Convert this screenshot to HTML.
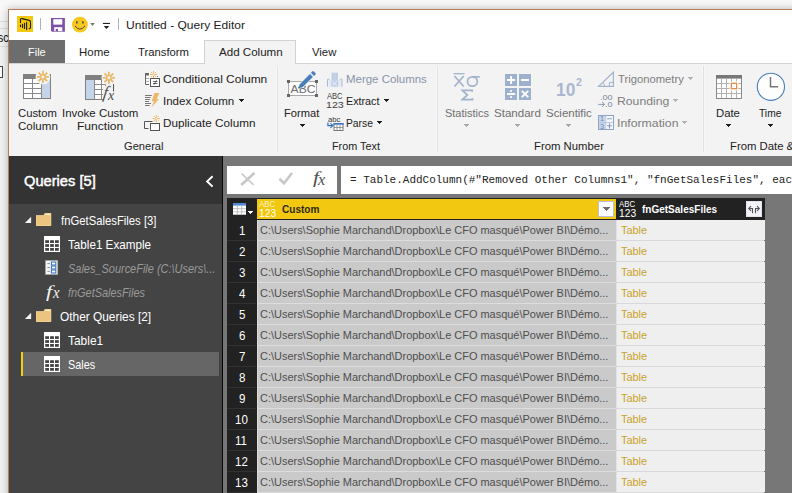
<!DOCTYPE html>
<html><head><meta charset="utf-8"><title>Untitled - Query Editor</title>
<style>
html,body{margin:0;padding:0;}
body{width:792px;height:493px;overflow:hidden;position:relative;background:#f0f0f0;font-family:"Liberation Sans",sans-serif;}
#root{position:absolute;left:0;top:0;width:792px;height:493px;overflow:hidden;}
#root div,#root svg{position:absolute;}
.t{position:absolute;white-space:pre;transform-origin:0 0;}
</style></head><body><div id="root">
<div style="left:0px;top:0px;width:792px;height:9px;background:#f8f8f8;"></div>
<div style="left:0px;top:9px;width:8px;height:484px;background:linear-gradient(#f8f8f8,#f2f2f2 20px,#f2f2f2);"></div>
<div style="left:0px;top:21px;width:8px;height:1px;background:#dcdcdc;"></div>
<div style="left:0px;top:28px;width:8px;height:1px;background:#dcdcdc;"></div>
<div style="left:0px;top:46px;width:8px;height:1px;background:#dcdcdc;"></div>
<div style="left:-2px;top:66px;width:5px;height:12px;background:#fff;border:1px solid #444;box-sizing:border-box;"></div>
<div style="left:8px;top:9px;width:800px;height:500px;background:#fff;border-left:1px solid #b97c58;border-top:1px solid #b97c58;box-sizing:border-box;box-shadow:0 0 8px rgba(0,0,0,0.27);"></div>
<svg style="left:17px;top:16px" width="16" height="16" viewBox="17 16 16 16"><rect x="17" y="16" width="16" height="16" fill="#f2c811"/>
<path d="M20.5 22.6 V19.8 Q20.5 18.4 22 18.6 L29.2 20.4 Q30.5 20.8 30.5 22.2 V27.4 Q30.5 28.6 29.2 28.6" fill="none" stroke="#231f10" stroke-width="1.1" stroke-linecap="round"/>
<g stroke="#231f10" stroke-width="1.15" stroke-linecap="round"><path d="M20.5 25 V26.6 M22.5 24.4 V27.4 M24.5 23.2 V28.5 M26.6 22.3 V29.6"/></g></svg>
<div style="left:40px;top:18px;width:1px;height:12px;background:#b0b0b0;"></div>
<svg style="left:51px;top:18px" width="14" height="14" viewBox="51 18 14 14"><path d="M51 18 H64.9 V31.7 H52 L51 30.7 Z" fill="#7d51a6"/><rect x="53.3" y="19.2" width="9" height="5.4" fill="#fff"/><rect x="54.2" y="27.2" width="8.1" height="4" fill="#fff"/><rect x="55.7" y="28.9" width="2.3" height="2.4" fill="#7d51a6"/></svg>
<svg style="left:71px;top:16px" width="18" height="18" viewBox="71 16 18 18"><circle cx="79.9" cy="24.6" r="7.9" fill="#f8c81c"/><ellipse cx="76.9" cy="22.4" rx="0.75" ry="1.4" fill="#4a4560"/><ellipse cx="82.9" cy="22.4" rx="0.75" ry="1.4" fill="#4a4560"/><path d="M75.2 26.2 Q79.9 32.4 84.7 26.2" fill="none" stroke="#4a4550" stroke-width="1" stroke-linecap="round"/></svg>
<svg style="left:90px;top:23px" width="6" height="4" viewBox="0 0 6 4"><path d="M0.2 0.1 H4.8 L2.5 2.9 Z" fill="#777"/></svg>
<svg style="left:102px;top:22px" width="9" height="8" viewBox="102 22 9 8"><rect x="102.9" y="22.9" width="7.1" height="1.1" fill="#222"/><path d="M103.7 25.9 H109.3 L106.5 28.9 Z" fill="#222"/></svg>
<div style="left:118px;top:18px;width:1px;height:12px;background:#b0b0b0;"></div>
<div style="left:9px;top:40px;width:56px;height:23px;background:#6d6d6d;"></div>
<div style="left:9px;top:63px;width:783px;height:93px;background:#f3f3f3;border-top:1px solid #d2d2d2;box-sizing:border-box;"></div>
<div style="left:204px;top:40px;width:92px;height:24px;background:#f3f3f3;border:1px solid #d2d2d2;border-bottom:none;box-sizing:border-box;"></div>
<div style="left:276px;top:66px;width:3px;height:86px;background:#f8f8f8;"></div>
<div style="left:277px;top:66px;width:1px;height:86px;background:#e0e0e0;"></div>
<div style="left:436px;top:66px;width:3px;height:86px;background:#f8f8f8;"></div>
<div style="left:437px;top:66px;width:1px;height:86px;background:#e0e0e0;"></div>
<div style="left:702px;top:66px;width:3px;height:86px;background:#f8f8f8;"></div>
<div style="left:703px;top:66px;width:1px;height:86px;background:#e0e0e0;"></div>
<svg style="left:20px;top:68px" width="36" height="34" viewBox="20 68 36 34">
<rect x="23.5" y="74.5" width="27" height="24" fill="#fff" stroke="#808080"/>
<rect x="23" y="74" width="28" height="5" fill="#808080"/>
<rect x="42" y="79" width="8" height="19" fill="#c4d5ea"/>
<g stroke="#8a8a8a" stroke-width="1"><line x1="32.5" y1="79" x2="32.5" y2="98"/><line x1="41.5" y1="79" x2="41.5" y2="98"/><line x1="24" y1="83.5" x2="41" y2="83.5"/><line x1="24" y1="88.5" x2="41" y2="88.5"/><line x1="24" y1="93.5" x2="41" y2="93.5"/></g>
<circle cx="42.9" cy="76.9" r="7.3999999999999995" fill="#f3f3f3"/><g stroke="#e9b96a" stroke-width="1.8"><line x1="45.21" y1="76.90" x2="49.00" y2="76.90"/><line x1="44.53" y1="78.53" x2="47.21" y2="81.21"/><line x1="42.90" y1="79.21" x2="42.90" y2="83.00"/><line x1="41.27" y1="78.53" x2="38.59" y2="81.21"/><line x1="40.59" y1="76.90" x2="36.80" y2="76.90"/><line x1="41.27" y1="75.27" x2="38.59" y2="72.59"/><line x1="42.90" y1="74.59" x2="42.90" y2="70.80"/><line x1="44.53" y1="75.27" x2="47.21" y2="72.59"/></g><circle cx="42.9" cy="76.9" r="2.2" fill="#f4f4f8" stroke="#e9b96a" stroke-width="1.4400000000000002"/></svg>
<svg style="left:82px;top:68px" width="38" height="36" viewBox="82 68 38 36">
<rect x="85.5" y="75.5" width="20" height="24" fill="#fff" stroke="#808080"/>
<rect x="85" y="75" width="21" height="5" fill="#808080"/>
<rect x="86" y="80" width="8" height="19" fill="#c4d5ea"/>
<g stroke="#8a8a8a" stroke-width="1"><line x1="94.5" y1="80" x2="94.5" y2="99"/><line x1="101.5" y1="80" x2="101.5" y2="99"/><line x1="95" y1="84.5" x2="106" y2="84.5"/><line x1="95" y1="89.5" x2="104" y2="89.5"/><line x1="95" y1="94.5" x2="103" y2="94.5"/></g>
<rect x="103" y="86" width="14" height="16" fill="#f3f3f3"/>
<circle cx="108.9" cy="77.8" r="7.3999999999999995" fill="#f3f3f3"/><g stroke="#e9b96a" stroke-width="1.8"><line x1="111.21" y1="77.80" x2="115.00" y2="77.80"/><line x1="110.53" y1="79.43" x2="113.21" y2="82.11"/><line x1="108.90" y1="80.11" x2="108.90" y2="83.90"/><line x1="107.27" y1="79.43" x2="104.59" y2="82.11"/><line x1="106.59" y1="77.80" x2="102.80" y2="77.80"/><line x1="107.27" y1="76.17" x2="104.59" y2="73.49"/><line x1="108.90" y1="75.49" x2="108.90" y2="71.70"/><line x1="110.53" y1="76.17" x2="113.21" y2="73.49"/></g><circle cx="108.9" cy="77.8" r="2.2" fill="#f4f4f8" stroke="#e9b96a" stroke-width="1.4400000000000002"/>
<line x1="113.5" y1="84" x2="113.5" y2="91.5" stroke="#555" stroke-width="1"/>
<text transform="translate(102.4,98.4) skewX(-9) scale(1.2,1.28)" font-family="Liberation Serif, serif" font-style="italic" font-size="13.5" fill="#4a4a4a">f</text><text x="108" y="99.6" font-family="Liberation Serif, serif" font-style="italic" font-size="14" fill="#4a4a4a">x</text></svg>
<svg style="left:143px;top:68px" width="20" height="20" viewBox="143 68 20 20">
<rect x="144.6" y="72.6" width="5" height="12.6" fill="#fafafa"/>
<path d="M149 73.5 H145.5 V84.5 H149" stroke="#666" fill="none"/>
<rect x="145.1" y="73.1" width="3.8" height="2.4" fill="#666"/>
<path d="M146 78.5 H149 M146 81.4 H149" stroke="#9a9a9a" stroke-width="0.8"/>
<circle cx="153.5" cy="74.5" r="4.4" fill="#f5f5f7"/><g stroke="#e9b55f" stroke-width="0.95"><line x1="154.80" y1="74.50" x2="157.10" y2="74.50"/><line x1="153.50" y1="75.80" x2="153.50" y2="78.10"/><line x1="152.20" y1="74.50" x2="149.90" y2="74.50"/><line x1="153.50" y1="73.20" x2="153.50" y2="70.90"/></g><g fill="#e9b55f"><circle cx="155.55" cy="76.55" r="0.55"/><circle cx="151.45" cy="76.55" r="0.55"/><circle cx="151.45" cy="72.45" r="0.55"/><circle cx="155.55" cy="72.45" r="0.55"/></g><circle cx="153.5" cy="74.5" r="1.15" fill="#fff" stroke="#e9b55f" stroke-width="0.9"/>
<line x1="153.5" y1="76" x2="153.5" y2="78.4" stroke="#e9b55f" stroke-width="0.95"/>
<rect x="150.5" y="78.5" width="9" height="8" fill="#fff" stroke="#555" stroke-width="1"/>
<path d="M153 81.5 H157.4 M153 83.5 H157.4 M156.6 80.3 L153.9 84.8" stroke="#444" stroke-width="0.8" fill="none"/>
<circle cx="157.5" cy="76.4" r="0.5" fill="#555"/></svg>
<svg style="left:143px;top:92px" width="20" height="18" viewBox="143 92 20 18">
<g stroke="#6a6a6a" stroke-width="0.9"><line x1="145" y1="95.5" x2="151.8" y2="95.5"/><line x1="145" y1="97.5" x2="150.5" y2="97.5"/><line x1="145" y1="99.5" x2="149.9" y2="99.5"/><line x1="145" y1="101.5" x2="149" y2="101.5"/><line x1="145" y1="103.5" x2="151" y2="103.5"/><line x1="145" y1="105.5" x2="149.6" y2="105.5"/></g>
<path d="M154.5 93.1 L159.4 93.1 L156.7 98.9 L159 98.9 L151.4 107.4 L154 101.2 L151.6 101.2 Z" fill="#ebb868"/></svg>
<svg style="left:143px;top:112px" width="20" height="21" viewBox="143 112 20 21">
<path d="M148.5 128.5 H144.5 V121.5 H152.5" fill="none" stroke="#555"/>
<rect x="150.5" y="123.5" width="9" height="7" fill="#fff" stroke="#555"/>
<circle cx="156.3" cy="118.6" r="4.4" fill="#f5f5f7"/><g stroke="#e9b55f" stroke-width="0.95"><line x1="157.60" y1="118.60" x2="159.90" y2="118.60"/><line x1="156.30" y1="119.90" x2="156.30" y2="122.20"/><line x1="155.00" y1="118.60" x2="152.70" y2="118.60"/><line x1="156.30" y1="117.30" x2="156.30" y2="115.00"/></g><g fill="#e9b55f"><circle cx="158.35" cy="120.65" r="0.55"/><circle cx="154.25" cy="120.65" r="0.55"/><circle cx="154.25" cy="116.55" r="0.55"/><circle cx="158.35" cy="116.55" r="0.55"/></g><circle cx="156.3" cy="118.6" r="1.15" fill="#fff" stroke="#e9b55f" stroke-width="0.9"/></svg>
<svg style="left:284px;top:68px" width="38" height="32" viewBox="284 68 38 32">
<rect x="288.5" y="81.5" width="28" height="14" fill="#fdfdfd" stroke="#a0a0a0" stroke-width="0.9"/>
<g fill="#666"><rect x="287" y="80" width="3" height="3"/><rect x="315" y="80" width="3" height="3"/><rect x="287" y="94" width="3" height="3"/><rect x="315" y="94" width="3" height="3"/></g>
<text x="290.6" y="93" font-family="Liberation Sans, sans-serif" font-size="11.8" fill="#6c6c6c" textLength="24.8" lengthAdjust="spacingAndGlyphs">ABC</text>
<path d="M298.2 88.5 L299.2 84.4 L310 73.6 L313.3 76.9 L302.4 87.7 Z" fill="#4a7ebb" stroke="#f3f3f3" stroke-width="0.7"/>
<path d="M310.9 72.7 L312.2 71.4 Q313 70.8 313.8 71.5 L315.4 73.1 Q316 73.9 315.4 74.7 L314.1 76 Z" fill="#4a7ebb"/>
<path d="M298.2 88.5 L298.7 86.4 L300.3 88 Z" fill="#2c5a94"/></svg>
<svg style="left:325px;top:70px" width="20" height="18" viewBox="325 70 20 18">
<path d="M329.6 79.2 H327.5 V86.6 M339.8 79.2 H341.9 V86.6" fill="none" stroke="#a5b9d8" stroke-width="1"/>
<rect x="328.6" y="80" width="12.2" height="6.8" fill="#e3e9f3"/>
<rect x="332" y="72.7" width="5.4" height="14.1" fill="#c3d1e7"/>
<path d="M332 80 L334.7 84.4 L337.4 80 M332 86.8 L334.7 83 L337.4 86.8" fill="none" stroke="#e6ecf5" stroke-width="1"/>
<path d="M332 72.7 V86.8 M337.4 72.7 V86.8" stroke="#b2c3de" stroke-width="0.7"/></svg>
<svg style="left:325px;top:121px" width="20" height="11" viewBox="325 121 20 11">
<path d="M327.9 122.4 V125.6 H332" fill="none" stroke="#2f6fc0" stroke-width="1.2"/><path d="M330.4 123.3 L333 125.6 L330.4 127.9" fill="none" stroke="#2f6fc0" stroke-width="1.1"/>
<rect x="334" y="123.5" width="9" height="7" fill="#fff" stroke="#6a6a6a" stroke-width="0.9"/><rect x="333.5" y="123" width="10" height="1.7" fill="#3a76c4"/>
<path d="M337 125 V130.5 M340 125 V130.5 M334 127.5 H343" stroke="#777" stroke-width="0.7"/></svg>
<svg style="left:450px;top:70px" width="34" height="34" viewBox="450 70 34 34">
<g stroke="#a2b3cd" fill="none" stroke-width="1.7">
<path d="M453.4 73.7 H464.6" stroke-width="1.3"/>
<path d="M454.5 76 L463.7 86.5 M463.7 76 L454.5 86.5"/>
<ellipse cx="472.4" cy="81.5" rx="4.9" ry="4.7"/><path d="M472.4 76.8 H479.8"/>
<path d="M472.2 91.8 V90.3 H462.3 L467.4 95 L462.3 99.6 H472.5 V98"/>
</g></svg>
<svg style="left:504px;top:73px" width="28" height="28" viewBox="504 73 28 28">
<rect x="505" y="74" width="12" height="12" fill="#9db1cf"/><rect x="519" y="74" width="12" height="12" fill="#9db1cf"/>
<rect x="505" y="88" width="12" height="12" fill="#9db1cf"/><rect x="519" y="88" width="12" height="12" fill="#9db1cf"/>
<g stroke="#fff" stroke-width="1.9"><path d="M507 80 H515.2 M511.1 75.9 V84.1"/><path d="M521 80 H529"/><path d="M507 94 H515.2"/><path d="M521.8 90.8 L528.2 97.2 M528.2 90.8 L521.8 97.2"/></g>
<g fill="#fff"><circle cx="511.1" cy="91" r="1.05"/><circle cx="511.1" cy="97.1" r="1.05"/></g></svg>
<svg style="left:596px;top:70px" width="20" height="19" viewBox="596 70 20 19">
<path d="M598.6 86.4 H613.4 V72.2 Z" fill="none" stroke="#a2b3cd" stroke-width="1.2"/>
<path d="M609.4 86.4 V82.4 H613.4" fill="none" stroke="#a2b3cd" stroke-width="1"/>
<path d="M604.4 86.4 A5 5 0 0 0 603 82.6" fill="none" stroke="#a2b3cd" stroke-width="1"/></svg>
<svg style="left:597px;top:101px" width="9" height="7" viewBox="597 101 9 7"><path d="M598.2 104.4 H604.4 M602 102 L604.6 104.4 L602 106.8" fill="none" stroke="#8a9ab4" stroke-width="1"/></svg>
<svg style="left:597px;top:114px" width="18" height="17" viewBox="597 114 18 17">
<rect x="598.5" y="115.5" width="15" height="14" fill="#f4f8fd" stroke="#8fa3c6"/>
<rect x="599" y="116" width="6.4" height="13" fill="#c9d6ea"/>
<path d="M599 122.5 H613 M605.7 116 V129" stroke="#b4c3dc" stroke-width="0.9"/>
<path d="M607 118.8 H612 M607 125.8 H612 M609.5 123.2 V128.4" stroke="#8a9fc2" stroke-width="1.1"/>
<text x="600" y="121.4" font-family="Liberation Sans, sans-serif" font-size="7.4" fill="#7088b0">1</text>
<text x="600" y="128.6" font-family="Liberation Sans, sans-serif" font-size="7.4" fill="#7088b0">3</text></svg>
<svg style="left:715px;top:74px" width="28" height="26" viewBox="715 74 28 26">
<rect x="716.5" y="75.5" width="25" height="23" fill="#fff" stroke="#8a8a8a"/>
<rect x="716" y="75" width="26" height="3.6" fill="#777"/>
<g stroke="#b2b2b2" stroke-width="1"><path d="M721.5 79 V98 M726.5 79 V98 M731.5 79 V98 M736.5 79 V98 M717 83.5 H741 M717 88.5 H741 M717 93.5 H741"/></g>
<rect x="729.6" y="81.6" width="8.8" height="8.8" fill="#fff"/><rect x="731.3" y="83.3" width="5.4" height="5.4" fill="#fff" stroke="#e8873a" stroke-width="1.2"/></svg>
<svg style="left:755px;top:71px" width="32" height="32" viewBox="755 71 32 32">
<circle cx="770.9" cy="86.8" r="13.6" fill="#fff" stroke="#4a7ebb" stroke-width="1.1"/>
<path d="M770.5 77 V86.8 H778.2" fill="none" stroke="#777" stroke-width="1.5"/></svg>
<div style="left:9px;top:156px;width:783px;height:337px;background:#777;"></div>
<div style="left:9px;top:156px;width:213px;height:48px;background:#333;"></div>
<div style="left:9px;top:204px;width:213px;height:289px;background:#444;"></div>
<div style="left:222px;top:156px;width:1px;height:337px;background:#060606;"></div>
<svg style="left:204px;top:174px" width="12" height="15" viewBox="0 0 12 15"><path d="M8.6 2.2 L3.2 7.4 L8.6 12.6" fill="none" stroke="#fff" stroke-width="2"/></svg>
<svg style="left:24px;top:216px" width="8" height="8" viewBox="0 0 8 8"><path d="M7.1 0.8 V6.9 H0.9 Z" fill="#f4f4f4"/></svg>
<svg style="left:36px;top:213px" width="16" height="13" viewBox="0 0 16 13"><path d="M0 2.3 L7.6 2.3 L8.9 0 L15.1 0 L15.1 12.9 L0 12.9 Z" fill="#ebc580"/><path d="M0.3 2.6 H7.8 L9.1 0.3 H14.8 V12.6 H0.3 Z" fill="none" stroke="#f3d69c" stroke-width="0.6"/><path d="M9.6 1.5 H14.2" stroke="#fff6e2" stroke-width="0.9"/></svg>
<svg style="left:44px;top:236px" width="16" height="16" viewBox="0 0 16 16"><rect x="0" y="0" width="16" height="16" fill="#fff"/><g fill="#444"><rect x="1.2" y="4.2" width="3.8" height="2.8"/><rect x="6.1" y="4.2" width="3.8" height="2.8"/><rect x="11.0" y="4.2" width="3.8" height="2.8"/><rect x="1.2" y="8.1" width="3.8" height="2.8"/><rect x="6.1" y="8.1" width="3.8" height="2.8"/><rect x="11.0" y="8.1" width="3.8" height="2.8"/><rect x="1.2" y="12.0" width="3.8" height="2.8"/><rect x="6.1" y="12.0" width="3.8" height="2.8"/><rect x="11.0" y="12.0" width="3.8" height="2.8"/></g></svg>
<svg style="left:45px;top:260px" width="14" height="15" viewBox="0 0 14 15"><rect x="0.4" y="0.4" width="12.4" height="14.2" fill="#f6f6f6" stroke="#9a9a9a" stroke-width="0.6"/>
<g stroke="#8a8a8a" stroke-width="1"><path d="M2.4 3.6 H4.8 M2.4 7.5 H4.8 M2.4 11.4 H4.8"/></g>
<g fill="#fff" stroke="#2f6fc0" stroke-width="1"><rect x="6.4" y="2" width="4.4" height="3"/><rect x="6.4" y="6" width="4.4" height="3"/><rect x="6.4" y="10" width="4.4" height="3"/></g></svg>
<svg style="left:24px;top:312px" width="8" height="8" viewBox="0 0 8 8"><path d="M7.1 0.8 V6.9 H0.9 Z" fill="#f4f4f4"/></svg>
<svg style="left:36px;top:309px" width="16" height="13" viewBox="0 0 16 13"><path d="M0 2.3 L7.6 2.3 L8.9 0 L15.1 0 L15.1 12.9 L0 12.9 Z" fill="#ebc580"/><path d="M0.3 2.6 H7.8 L9.1 0.3 H14.8 V12.6 H0.3 Z" fill="none" stroke="#f3d69c" stroke-width="0.6"/><path d="M9.6 1.5 H14.2" stroke="#fff6e2" stroke-width="0.9"/></svg>
<svg style="left:44px;top:332px" width="16" height="16" viewBox="0 0 16 16"><rect x="0" y="0" width="16" height="16" fill="#fff"/><g fill="#444"><rect x="1.2" y="4.2" width="3.8" height="2.8"/><rect x="6.1" y="4.2" width="3.8" height="2.8"/><rect x="11.0" y="4.2" width="3.8" height="2.8"/><rect x="1.2" y="8.1" width="3.8" height="2.8"/><rect x="6.1" y="8.1" width="3.8" height="2.8"/><rect x="11.0" y="8.1" width="3.8" height="2.8"/><rect x="1.2" y="12.0" width="3.8" height="2.8"/><rect x="6.1" y="12.0" width="3.8" height="2.8"/><rect x="11.0" y="12.0" width="3.8" height="2.8"/></g></svg>
<div style="left:21px;top:352px;width:198px;height:24px;background:#666;"></div>
<div style="left:21px;top:352px;width:2px;height:24px;background:#f5cd14;"></div>
<svg style="left:44px;top:356px" width="16" height="16" viewBox="0 0 16 16"><rect x="0" y="0" width="16" height="16" fill="#fff"/><g fill="#444"><rect x="1.2" y="4.2" width="3.8" height="2.8"/><rect x="6.1" y="4.2" width="3.8" height="2.8"/><rect x="11.0" y="4.2" width="3.8" height="2.8"/><rect x="1.2" y="8.1" width="3.8" height="2.8"/><rect x="6.1" y="8.1" width="3.8" height="2.8"/><rect x="11.0" y="8.1" width="3.8" height="2.8"/><rect x="1.2" y="12.0" width="3.8" height="2.8"/><rect x="6.1" y="12.0" width="3.8" height="2.8"/><rect x="11.0" y="12.0" width="3.8" height="2.8"/></g></svg>
<div style="left:227px;top:166px;width:110px;height:27.5px;background:#fff;"></div>
<div style="left:341px;top:166px;width:451px;height:27.5px;background:#fff;"></div>
<svg style="left:238px;top:170px" width="20" height="18" viewBox="238 170 20 18"><path d="M241.6 173.6 L253.6 184.8" stroke="#cbcbcb" stroke-width="1.7" fill="none"/><path d="M254.4 173 L241.2 185" stroke="#c6c6c6" stroke-width="2.6" fill="none"/></svg>
<svg style="left:276px;top:170px" width="20" height="18" viewBox="276 170 20 18"><path d="M279.4 178.8 L284 183.2 L292 173" stroke="#c8c8c8" stroke-width="2.6" fill="none"/></svg>
<div style="left:227px;top:198px;width:30px;height:295px;background:#222;"></div>
<div style="left:257px;top:198px;width:508px;height:22px;background:#222;"></div>
<div style="left:257px;top:199px;width:359px;height:20px;background:#f2c811;"></div>
<svg style="left:232px;top:202px" width="16" height="14" viewBox="232 202 16 14"><rect x="233" y="203" width="13" height="11.7" fill="#fff"/><rect x="233" y="203" width="13" height="2.6" fill="#5088d2"/>
<g fill="#b9b9b9"><rect x="236.9" y="205.6" width="0.9" height="9.1"/><rect x="241.3" y="205.6" width="0.9" height="9.1"/><rect x="233" y="208.3" width="13" height="0.9"/><rect x="233" y="211.4" width="13" height="0.9"/></g></svg>
<div style="left:248px;top:211px;width:5px;height:1px;background:#fff;"></div>
<div style="left:249px;top:212px;width:3px;height:1px;background:#fff;"></div>
<div style="left:250px;top:213px;width:1px;height:1px;background:#fff;"></div>
<div style="left:598px;top:201px;width:16px;height:16px;background:#fff;border:1px solid #b9c1d8;box-sizing:border-box;"></div>
<div style="left:603px;top:207px;width:7px;height:1px;background:#6e6e6e;"></div>
<div style="left:604px;top:208px;width:5px;height:1px;background:#6e6e6e;"></div>
<div style="left:605px;top:209px;width:3px;height:1px;background:#6e6e6e;"></div>
<div style="left:606px;top:210px;width:1px;height:1px;background:#6e6e6e;"></div>
<div style="left:746px;top:201px;width:16px;height:16px;background:#f2f4fa;border:1px solid #e2e5ee;box-sizing:border-box;"></div>
<svg style="left:746px;top:201px" width="16" height="16" viewBox="746 201 16 16"><path d="M752.5 213.2 V208.5 H749.2 M751 206.2 L748.7 208.5 L751 210.8 M755.5 213.2 V208.5 H758.8 M757 206.2 L759.3 208.5 L757 210.8" fill="none" stroke="#555" stroke-width="1.1"/></svg>
<div style="left:257px;top:220px;width:359px;height:20px;background:#cacaca;"></div>
<div style="left:616px;top:220px;width:149px;height:20px;background:#efefef;"></div>
<div style="left:257px;top:220px;width:1px;height:20px;background:#dcdcdc;"></div>
<div style="left:616px;top:220px;width:1px;height:20px;background:#e2e2e2;"></div>
<div style="left:257px;top:241px;width:359px;height:20px;background:#cacaca;"></div>
<div style="left:616px;top:241px;width:149px;height:20px;background:#efefef;"></div>
<div style="left:257px;top:241px;width:1px;height:20px;background:#dcdcdc;"></div>
<div style="left:616px;top:241px;width:1px;height:20px;background:#e2e2e2;"></div>
<div style="left:227px;top:240px;width:29px;height:1px;background:#323232;"></div>
<div style="left:257px;top:240px;width:359px;height:1px;background:#dddddd;"></div>
<div style="left:616px;top:240px;width:148px;height:1px;background:#d9d9d9;"></div>
<div style="left:257px;top:262px;width:359px;height:20px;background:#cacaca;"></div>
<div style="left:616px;top:262px;width:149px;height:20px;background:#efefef;"></div>
<div style="left:257px;top:262px;width:1px;height:20px;background:#dcdcdc;"></div>
<div style="left:616px;top:262px;width:1px;height:20px;background:#e2e2e2;"></div>
<div style="left:227px;top:261px;width:29px;height:1px;background:#323232;"></div>
<div style="left:257px;top:261px;width:359px;height:1px;background:#dddddd;"></div>
<div style="left:616px;top:261px;width:148px;height:1px;background:#d9d9d9;"></div>
<div style="left:257px;top:283px;width:359px;height:20px;background:#cacaca;"></div>
<div style="left:616px;top:283px;width:149px;height:20px;background:#efefef;"></div>
<div style="left:257px;top:283px;width:1px;height:20px;background:#dcdcdc;"></div>
<div style="left:616px;top:283px;width:1px;height:20px;background:#e2e2e2;"></div>
<div style="left:227px;top:282px;width:29px;height:1px;background:#323232;"></div>
<div style="left:257px;top:282px;width:359px;height:1px;background:#dddddd;"></div>
<div style="left:616px;top:282px;width:148px;height:1px;background:#d9d9d9;"></div>
<div style="left:257px;top:304px;width:359px;height:20px;background:#cacaca;"></div>
<div style="left:616px;top:304px;width:149px;height:20px;background:#efefef;"></div>
<div style="left:257px;top:304px;width:1px;height:20px;background:#dcdcdc;"></div>
<div style="left:616px;top:304px;width:1px;height:20px;background:#e2e2e2;"></div>
<div style="left:227px;top:303px;width:29px;height:1px;background:#323232;"></div>
<div style="left:257px;top:303px;width:359px;height:1px;background:#dddddd;"></div>
<div style="left:616px;top:303px;width:148px;height:1px;background:#d9d9d9;"></div>
<div style="left:257px;top:325px;width:359px;height:20px;background:#cacaca;"></div>
<div style="left:616px;top:325px;width:149px;height:20px;background:#efefef;"></div>
<div style="left:257px;top:325px;width:1px;height:20px;background:#dcdcdc;"></div>
<div style="left:616px;top:325px;width:1px;height:20px;background:#e2e2e2;"></div>
<div style="left:227px;top:324px;width:29px;height:1px;background:#323232;"></div>
<div style="left:257px;top:324px;width:359px;height:1px;background:#dddddd;"></div>
<div style="left:616px;top:324px;width:148px;height:1px;background:#d9d9d9;"></div>
<div style="left:257px;top:346px;width:359px;height:20px;background:#cacaca;"></div>
<div style="left:616px;top:346px;width:149px;height:20px;background:#efefef;"></div>
<div style="left:257px;top:346px;width:1px;height:20px;background:#dcdcdc;"></div>
<div style="left:616px;top:346px;width:1px;height:20px;background:#e2e2e2;"></div>
<div style="left:227px;top:345px;width:29px;height:1px;background:#323232;"></div>
<div style="left:257px;top:345px;width:359px;height:1px;background:#dddddd;"></div>
<div style="left:616px;top:345px;width:148px;height:1px;background:#d9d9d9;"></div>
<div style="left:257px;top:367px;width:359px;height:20px;background:#cacaca;"></div>
<div style="left:616px;top:367px;width:149px;height:20px;background:#efefef;"></div>
<div style="left:257px;top:367px;width:1px;height:20px;background:#dcdcdc;"></div>
<div style="left:616px;top:367px;width:1px;height:20px;background:#e2e2e2;"></div>
<div style="left:227px;top:366px;width:29px;height:1px;background:#323232;"></div>
<div style="left:257px;top:366px;width:359px;height:1px;background:#dddddd;"></div>
<div style="left:616px;top:366px;width:148px;height:1px;background:#d9d9d9;"></div>
<div style="left:257px;top:388px;width:359px;height:20px;background:#cacaca;"></div>
<div style="left:616px;top:388px;width:149px;height:20px;background:#efefef;"></div>
<div style="left:257px;top:388px;width:1px;height:20px;background:#dcdcdc;"></div>
<div style="left:616px;top:388px;width:1px;height:20px;background:#e2e2e2;"></div>
<div style="left:227px;top:387px;width:29px;height:1px;background:#323232;"></div>
<div style="left:257px;top:387px;width:359px;height:1px;background:#dddddd;"></div>
<div style="left:616px;top:387px;width:148px;height:1px;background:#d9d9d9;"></div>
<div style="left:257px;top:409px;width:359px;height:20px;background:#cacaca;"></div>
<div style="left:616px;top:409px;width:149px;height:20px;background:#efefef;"></div>
<div style="left:257px;top:409px;width:1px;height:20px;background:#dcdcdc;"></div>
<div style="left:616px;top:409px;width:1px;height:20px;background:#e2e2e2;"></div>
<div style="left:227px;top:408px;width:29px;height:1px;background:#323232;"></div>
<div style="left:257px;top:408px;width:359px;height:1px;background:#dddddd;"></div>
<div style="left:616px;top:408px;width:148px;height:1px;background:#d9d9d9;"></div>
<div style="left:257px;top:430px;width:359px;height:20px;background:#cacaca;"></div>
<div style="left:616px;top:430px;width:149px;height:20px;background:#efefef;"></div>
<div style="left:257px;top:430px;width:1px;height:20px;background:#dcdcdc;"></div>
<div style="left:616px;top:430px;width:1px;height:20px;background:#e2e2e2;"></div>
<div style="left:227px;top:429px;width:29px;height:1px;background:#323232;"></div>
<div style="left:257px;top:429px;width:359px;height:1px;background:#dddddd;"></div>
<div style="left:616px;top:429px;width:148px;height:1px;background:#d9d9d9;"></div>
<div style="left:257px;top:451px;width:359px;height:20px;background:#cacaca;"></div>
<div style="left:616px;top:451px;width:149px;height:20px;background:#efefef;"></div>
<div style="left:257px;top:451px;width:1px;height:20px;background:#dcdcdc;"></div>
<div style="left:616px;top:451px;width:1px;height:20px;background:#e2e2e2;"></div>
<div style="left:227px;top:450px;width:29px;height:1px;background:#323232;"></div>
<div style="left:257px;top:450px;width:359px;height:1px;background:#dddddd;"></div>
<div style="left:616px;top:450px;width:148px;height:1px;background:#d9d9d9;"></div>
<div style="left:257px;top:472px;width:359px;height:20px;background:#cacaca;"></div>
<div style="left:616px;top:472px;width:149px;height:20px;background:#efefef;"></div>
<div style="left:257px;top:472px;width:1px;height:20px;background:#dcdcdc;"></div>
<div style="left:616px;top:472px;width:1px;height:20px;background:#e2e2e2;"></div>
<div style="left:227px;top:471px;width:29px;height:1px;background:#323232;"></div>
<div style="left:257px;top:471px;width:359px;height:1px;background:#dddddd;"></div>
<div style="left:616px;top:471px;width:148px;height:1px;background:#d9d9d9;"></div>
<div style="left:227px;top:492px;width:29px;height:1px;background:#323232;"></div>
<div style="left:257px;top:492px;width:359px;height:1px;background:#dddddd;"></div>
<div style="left:616px;top:492px;width:148px;height:1px;background:#d9d9d9;"></div>
<div style="left:239px;top:99px;width:5px;height:1px;background:#1e1e1e;"></div>
<div style="left:240px;top:100px;width:3px;height:1px;background:#1e1e1e;"></div>
<div style="left:241px;top:101px;width:1px;height:1px;background:#1e1e1e;"></div>
<div style="left:300px;top:124px;width:5px;height:1px;background:#1e1e1e;"></div>
<div style="left:301px;top:125px;width:3px;height:1px;background:#1e1e1e;"></div>
<div style="left:302px;top:126px;width:1px;height:1px;background:#1e1e1e;"></div>
<div style="left:384px;top:99px;width:5px;height:1px;background:#1e1e1e;"></div>
<div style="left:385px;top:100px;width:3px;height:1px;background:#1e1e1e;"></div>
<div style="left:386px;top:101px;width:1px;height:1px;background:#1e1e1e;"></div>
<div style="left:377px;top:121px;width:5px;height:1px;background:#1e1e1e;"></div>
<div style="left:378px;top:122px;width:3px;height:1px;background:#1e1e1e;"></div>
<div style="left:379px;top:123px;width:1px;height:1px;background:#1e1e1e;"></div>
<div style="left:726px;top:124px;width:5px;height:1px;background:#1e1e1e;"></div>
<div style="left:727px;top:125px;width:3px;height:1px;background:#1e1e1e;"></div>
<div style="left:728px;top:126px;width:1px;height:1px;background:#1e1e1e;"></div>
<div style="left:768px;top:124px;width:5px;height:1px;background:#1e1e1e;"></div>
<div style="left:769px;top:125px;width:3px;height:1px;background:#1e1e1e;"></div>
<div style="left:770px;top:126px;width:1px;height:1px;background:#1e1e1e;"></div>
<div style="left:464px;top:124px;width:5px;height:1px;background:#a6a6a6;"></div>
<div style="left:465px;top:125px;width:3px;height:1px;background:#a6a6a6;"></div>
<div style="left:466px;top:126px;width:1px;height:1px;background:#a6a6a6;"></div>
<div style="left:515px;top:124px;width:5px;height:1px;background:#a6a6a6;"></div>
<div style="left:516px;top:125px;width:3px;height:1px;background:#a6a6a6;"></div>
<div style="left:517px;top:126px;width:1px;height:1px;background:#a6a6a6;"></div>
<div style="left:566px;top:124px;width:5px;height:1px;background:#a6a6a6;"></div>
<div style="left:567px;top:125px;width:3px;height:1px;background:#a6a6a6;"></div>
<div style="left:568px;top:126px;width:1px;height:1px;background:#a6a6a6;"></div>
<div style="left:688px;top:77px;width:5px;height:1px;background:#b2b2b2;"></div>
<div style="left:689px;top:78px;width:3px;height:1px;background:#b2b2b2;"></div>
<div style="left:690px;top:79px;width:1px;height:1px;background:#b2b2b2;"></div>
<div style="left:673px;top:99px;width:5px;height:1px;background:#b2b2b2;"></div>
<div style="left:674px;top:100px;width:3px;height:1px;background:#b2b2b2;"></div>
<div style="left:675px;top:101px;width:1px;height:1px;background:#b2b2b2;"></div>
<div style="left:682px;top:121px;width:5px;height:1px;background:#b2b2b2;"></div>
<div style="left:683px;top:122px;width:3px;height:1px;background:#b2b2b2;"></div>
<div style="left:684px;top:123px;width:1px;height:1px;background:#b2b2b2;"></div>
<span class="t" style="left:-2.29px;top:32.00px;font-size:12.29px;line-height:12.29px;color:#111;transform:scaleX(0.8609);">sc</span>
<span class="t" style="left:126.17px;top:20.00px;font-size:11.34px;line-height:11.34px;color:#222;transform:scaleX(1.0620);">Untitled - Query Editor</span>
<span class="t" style="left:28.1px;top:47.00px;font-size:11.34px;line-height:11.34px;color:#fff;transform:scaleX(0.9684);">File</span>
<span class="t" style="left:78.96px;top:47.00px;font-size:11.34px;line-height:11.34px;color:#222;transform:scaleX(1.0110);">Home</span>
<span class="t" style="left:137.75px;top:47.00px;font-size:11.34px;line-height:11.34px;color:#222;transform:scaleX(0.9960);">Transform</span>
<span class="t" style="left:311.85px;top:47.00px;font-size:11.34px;line-height:11.34px;color:#222;transform:scaleX(0.9985);">View</span>
<span class="t" style="left:218.68px;top:47.00px;font-size:11.34px;line-height:11.34px;color:#222;transform:scaleX(1.0213);">Add Column</span>
<span class="t" style="left:17.63px;top:108.00px;font-size:11.34px;line-height:11.34px;color:#222;transform:scaleX(0.9945);">Custom</span>
<span class="t" style="left:17.61px;top:121.00px;font-size:11.34px;line-height:11.34px;color:#222;transform:scaleX(1.0203);">Column</span>
<span class="t" style="left:61.84px;top:108.00px;font-size:11.34px;line-height:11.34px;color:#222;transform:scaleX(1.0099);">Invoke Custom</span>
<span class="t" style="left:77.11px;top:121.00px;font-size:11.34px;line-height:11.34px;color:#222;transform:scaleX(1.0649);">Function</span>
<span class="t" style="left:163.29px;top:74.00px;font-size:11.34px;line-height:11.34px;color:#222;transform:scaleX(1.0547);">Conditional Column</span>
<span class="t" style="left:162.83px;top:96.00px;font-size:11.34px;line-height:11.34px;color:#222;transform:scaleX(1.0187);">Index Column</span>
<span class="t" style="left:162.94px;top:118.00px;font-size:11.34px;line-height:11.34px;color:#222;transform:scaleX(1.0336);">Duplicate Column</span>
<span class="t" style="left:123.54px;top:141.00px;font-size:11.34px;line-height:11.34px;color:#222;transform:scaleX(0.9799);">General</span>
<span class="t" style="left:284.29px;top:108.00px;font-size:11.34px;line-height:11.34px;color:#222;transform:scaleX(0.9834);">Format</span>
<span class="t" style="left:345.96px;top:74.00px;font-size:11.34px;line-height:11.34px;color:#8795a8;transform:scaleX(1.0111);">Merge Columns</span>
<span class="t" style="left:327.19px;top:92.00px;font-size:8.41px;line-height:8.41px;color:#404040;transform:scaleX(0.9021);">ABC</span>
<span class="t" style="left:326.29px;top:100.00px;font-size:9.83px;line-height:9.83px;color:#404040;transform:scaleX(1.0837);">123</span>
<span class="t" style="left:346.02px;top:96.00px;font-size:11.34px;line-height:11.34px;color:#222;transform:scaleX(0.9488);">Extract</span>
<span class="t" style="left:327.57px;top:117.00px;font-size:7.18px;line-height:7.18px;color:#383838;transform:scaleX(1.0736);">abc</span>
<span class="t" style="left:346.05px;top:118.00px;font-size:11.34px;line-height:11.34px;color:#222;transform:scaleX(0.9091);">Parse</span>
<span class="t" style="left:331.91px;top:141.00px;font-size:11.34px;line-height:11.34px;color:#222;transform:scaleX(0.9564);">From Text</span>
<span class="t" style="left:444.5px;top:108.00px;font-size:11.34px;line-height:11.34px;color:#6f6f6f;transform:scaleX(0.9684);">Statistics</span>
<span class="t" style="left:494.48px;top:108.00px;font-size:11.34px;line-height:11.34px;color:#6f6f6f;transform:scaleX(1.0193);">Standard</span>
<span class="t" style="left:556.01px;top:82.00px;font-size:17.95px;line-height:17.95px;color:#a8b8d0;font-weight:700;transform:scaleX(0.9676);">10</span>
<span class="t" style="left:575.73px;top:76.50px;font-size:10.77px;line-height:10.77px;color:#a8b8d0;font-weight:700;transform:scaleX(0.9816);">2</span>
<span class="t" style="left:546.28px;top:108.00px;font-size:11.34px;line-height:11.34px;color:#6f6f6f;transform:scaleX(1.0106);">Scientific</span>
<span class="t" style="left:617.55px;top:74.00px;font-size:11.34px;line-height:11.34px;color:#7d7d7d;transform:scaleX(0.9934);">Trigonometry</span>
<span class="t" style="left:600.27px;top:94.00px;font-size:7.75px;line-height:7.75px;color:#7483a0;transform:scaleX(1.1770);">.00</span>
<span class="t" style="left:605.48px;top:101.30px;font-size:7.75px;line-height:7.75px;color:#7483a0;transform:scaleX(1.1542);">.0</span>
<span class="t" style="left:616.8px;top:96.00px;font-size:11.34px;line-height:11.34px;color:#7d7d7d;transform:scaleX(1.0782);">Rounding</span>
<span class="t" style="left:616.66px;top:118.00px;font-size:11.34px;line-height:11.34px;color:#7d7d7d;transform:scaleX(1.0858);">Information</span>
<span class="t" style="left:533.87px;top:141.00px;font-size:11.34px;line-height:11.34px;color:#222;transform:scaleX(1.0006);">From Number</span>
<span class="t" style="left:716.07px;top:108.00px;font-size:11.34px;line-height:11.34px;color:#222;transform:scaleX(0.9998);">Date</span>
<span class="t" style="left:759.47px;top:108.00px;font-size:11.34px;line-height:11.34px;color:#222;transform:scaleX(0.9039);">Time</span>
<span class="t" style="left:729.97px;top:141.00px;font-size:11.34px;line-height:11.34px;color:#222;transform:scaleX(1.0000);">From Date &amp; Time</span>
<span class="t" style="left:24.11px;top:174.00px;font-size:13.99px;line-height:13.99px;color:#fff;transform:scaleX(1.0487);-webkit-text-stroke:0.45px #fff;">Queries [5]</span>
<span class="t" style="left:60.64px;top:216.00px;font-size:11.91px;line-height:11.91px;color:#fff;transform:scaleX(0.9490);">fnGetSalesFiles [3]</span>
<span class="t" style="left:67.84px;top:240.00px;font-size:11.91px;line-height:11.91px;color:#fff;transform:scaleX(0.9795);">Table1 Example</span>
<span class="t" style="left:67.99px;top:264.00px;font-size:11.91px;line-height:11.91px;color:#9a9a9a;font-style:italic;transform:scaleX(0.9202);">Sales_SourceFile (C:\Users\...</span>
<span class="t" style="left:45.85px;top:283.60px;font-size:15.9px;line-height:15.9px;color:#f4f4f4;font-style:italic;font-family:'Liberation Serif', serif;transform:scaleX(1.3991);">f</span>
<span class="t" style="left:52.58px;top:284.80px;font-size:16.4px;line-height:16.4px;color:#f4f4f4;font-style:italic;font-family:'Liberation Serif', serif;transform:scaleX(0.8966);">x</span>
<span class="t" style="left:67.93px;top:288.00px;font-size:11.91px;line-height:11.91px;color:#9a9a9a;font-style:italic;transform:scaleX(0.9161);">fnGetSalesFiles</span>
<span class="t" style="left:60.24px;top:312.00px;font-size:11.91px;line-height:11.91px;color:#fff;transform:scaleX(0.9976);">Other Queries [2]</span>
<span class="t" style="left:67.83px;top:336.00px;font-size:11.91px;line-height:11.91px;color:#fff;transform:scaleX(1.0016);">Table1</span>
<span class="t" style="left:67.91px;top:360.00px;font-size:11.91px;line-height:11.91px;color:#fff;transform:scaleX(0.9124);">Sales</span>
<span class="t" style="left:312.66px;top:170.40px;font-size:15.7px;line-height:15.7px;color:#505050;font-style:italic;font-family:'Liberation Serif', serif;transform:scaleX(1.3851);">f</span>
<span class="t" style="left:318.1px;top:171.50px;font-size:16.4px;line-height:16.4px;color:#505050;font-style:italic;font-family:'Liberation Serif', serif;transform:scaleX(0.9917);">x</span>
<span class="t" style="left:350.08px;top:174.00px;font-size:11.6px;line-height:11.6px;color:#222;font-family:'Liberation Mono', monospace;transform:scaleX(0.9483);">= Table.AddColumn(#"Removed Other Columns1", "fnGetSalesFiles", each</span>
<span class="t" style="left:259.38px;top:200.00px;font-size:8.41px;line-height:8.41px;color:#fdf4c8;transform:scaleX(0.9316);">ABC</span>
<span class="t" style="left:258.52px;top:209.00px;font-size:10.39px;line-height:10.39px;color:#fffdf0;transform:scaleX(0.9898);">123</span>
<span class="t" style="left:281.69px;top:204.00px;font-size:11.34px;line-height:11.34px;color:#2e2a18;font-weight:700;transform:scaleX(0.8877);">Custom</span>
<span class="t" style="left:619.38px;top:200.00px;font-size:8.41px;line-height:8.41px;color:#fff;transform:scaleX(0.9316);">ABC</span>
<span class="t" style="left:618.52px;top:209.00px;font-size:10.39px;line-height:10.39px;color:#fff;transform:scaleX(0.9898);">123</span>
<span class="t" style="left:641.73px;top:204.00px;font-size:11.34px;line-height:11.34px;color:#fff;font-weight:700;transform:scaleX(0.8833);">fnGetSalesFiles</span>
<span class="t" style="left:238.67px;top:225.00px;font-size:12.57px;line-height:12.57px;color:#fff;transform:scaleX(0.9200);">1</span>
<span class="t" style="left:260.14px;top:225.00px;font-size:11.34px;line-height:11.34px;color:#4e4e4e;transform:scaleX(0.9673);">C:\Users\Sophie Marchand\Dropbox\Le CFO masqué\Power BI\Démo...</span>
<span class="t" style="left:620.55px;top:225.00px;font-size:11.34px;line-height:11.34px;color:#c9a227;transform:scaleX(0.9645);">Table</span>
<span class="t" style="left:238.97px;top:246.00px;font-size:12.57px;line-height:12.57px;color:#fff;transform:scaleX(0.9200);">2</span>
<span class="t" style="left:260.14px;top:246.00px;font-size:11.34px;line-height:11.34px;color:#4e4e4e;transform:scaleX(0.9673);">C:\Users\Sophie Marchand\Dropbox\Le CFO masqué\Power BI\Démo...</span>
<span class="t" style="left:620.55px;top:246.00px;font-size:11.34px;line-height:11.34px;color:#c9a227;transform:scaleX(0.9645);">Table</span>
<span class="t" style="left:239.11px;top:267.00px;font-size:12.57px;line-height:12.57px;color:#fff;transform:scaleX(0.9200);">3</span>
<span class="t" style="left:260.14px;top:267.00px;font-size:11.34px;line-height:11.34px;color:#4e4e4e;transform:scaleX(0.9673);">C:\Users\Sophie Marchand\Dropbox\Le CFO masqué\Power BI\Démo...</span>
<span class="t" style="left:620.55px;top:267.00px;font-size:11.34px;line-height:11.34px;color:#c9a227;transform:scaleX(0.9645);">Table</span>
<span class="t" style="left:239.28px;top:288.00px;font-size:12.57px;line-height:12.57px;color:#fff;transform:scaleX(0.9200);">4</span>
<span class="t" style="left:260.14px;top:288.00px;font-size:11.34px;line-height:11.34px;color:#4e4e4e;transform:scaleX(0.9673);">C:\Users\Sophie Marchand\Dropbox\Le CFO masqué\Power BI\Démo...</span>
<span class="t" style="left:620.55px;top:288.00px;font-size:11.34px;line-height:11.34px;color:#c9a227;transform:scaleX(0.9645);">Table</span>
<span class="t" style="left:239.09px;top:309.00px;font-size:12.57px;line-height:12.57px;color:#fff;transform:scaleX(0.9200);">5</span>
<span class="t" style="left:260.14px;top:309.00px;font-size:11.34px;line-height:11.34px;color:#4e4e4e;transform:scaleX(0.9673);">C:\Users\Sophie Marchand\Dropbox\Le CFO masqué\Power BI\Démo...</span>
<span class="t" style="left:620.55px;top:309.00px;font-size:11.34px;line-height:11.34px;color:#c9a227;transform:scaleX(0.9645);">Table</span>
<span class="t" style="left:238.96px;top:330.00px;font-size:12.57px;line-height:12.57px;color:#fff;transform:scaleX(0.9200);">6</span>
<span class="t" style="left:260.14px;top:330.00px;font-size:11.34px;line-height:11.34px;color:#4e4e4e;transform:scaleX(0.9673);">C:\Users\Sophie Marchand\Dropbox\Le CFO masqué\Power BI\Démo...</span>
<span class="t" style="left:620.55px;top:330.00px;font-size:11.34px;line-height:11.34px;color:#c9a227;transform:scaleX(0.9645);">Table</span>
<span class="t" style="left:238.96px;top:351.00px;font-size:12.57px;line-height:12.57px;color:#fff;transform:scaleX(0.9200);">7</span>
<span class="t" style="left:260.14px;top:351.00px;font-size:11.34px;line-height:11.34px;color:#4e4e4e;transform:scaleX(0.9673);">C:\Users\Sophie Marchand\Dropbox\Le CFO masqué\Power BI\Démo...</span>
<span class="t" style="left:620.55px;top:351.00px;font-size:11.34px;line-height:11.34px;color:#c9a227;transform:scaleX(0.9645);">Table</span>
<span class="t" style="left:239.05px;top:372.00px;font-size:12.57px;line-height:12.57px;color:#fff;transform:scaleX(0.9200);">8</span>
<span class="t" style="left:260.14px;top:372.00px;font-size:11.34px;line-height:11.34px;color:#4e4e4e;transform:scaleX(0.9673);">C:\Users\Sophie Marchand\Dropbox\Le CFO masqué\Power BI\Démo...</span>
<span class="t" style="left:620.55px;top:372.00px;font-size:11.34px;line-height:11.34px;color:#c9a227;transform:scaleX(0.9645);">Table</span>
<span class="t" style="left:239.01px;top:393.00px;font-size:12.57px;line-height:12.57px;color:#fff;transform:scaleX(0.9200);">9</span>
<span class="t" style="left:260.14px;top:393.00px;font-size:11.34px;line-height:11.34px;color:#4e4e4e;transform:scaleX(0.9673);">C:\Users\Sophie Marchand\Dropbox\Le CFO masqué\Power BI\Démo...</span>
<span class="t" style="left:620.55px;top:393.00px;font-size:11.34px;line-height:11.34px;color:#c9a227;transform:scaleX(0.9645);">Table</span>
<span class="t" style="left:235.42px;top:414.00px;font-size:12.57px;line-height:12.57px;color:#fff;transform:scaleX(0.9200);">10</span>
<span class="t" style="left:260.14px;top:414.00px;font-size:11.34px;line-height:11.34px;color:#4e4e4e;transform:scaleX(0.9673);">C:\Users\Sophie Marchand\Dropbox\Le CFO masqué\Power BI\Démo...</span>
<span class="t" style="left:620.55px;top:414.00px;font-size:11.34px;line-height:11.34px;color:#c9a227;transform:scaleX(0.9645);">Table</span>
<span class="t" style="left:235.42px;top:435.00px;font-size:12.57px;line-height:12.57px;color:#fff;transform:scaleX(0.9200);">11</span>
<span class="t" style="left:260.14px;top:435.00px;font-size:11.34px;line-height:11.34px;color:#4e4e4e;transform:scaleX(0.9673);">C:\Users\Sophie Marchand\Dropbox\Le CFO masqué\Power BI\Démo...</span>
<span class="t" style="left:620.55px;top:435.00px;font-size:11.34px;line-height:11.34px;color:#c9a227;transform:scaleX(0.9645);">Table</span>
<span class="t" style="left:235.42px;top:456.00px;font-size:12.57px;line-height:12.57px;color:#fff;transform:scaleX(0.9200);">12</span>
<span class="t" style="left:260.14px;top:456.00px;font-size:11.34px;line-height:11.34px;color:#4e4e4e;transform:scaleX(0.9673);">C:\Users\Sophie Marchand\Dropbox\Le CFO masqué\Power BI\Démo...</span>
<span class="t" style="left:620.55px;top:456.00px;font-size:11.34px;line-height:11.34px;color:#c9a227;transform:scaleX(0.9645);">Table</span>
<span class="t" style="left:235.42px;top:477.00px;font-size:12.57px;line-height:12.57px;color:#fff;transform:scaleX(0.9200);">13</span>
<span class="t" style="left:260.14px;top:477.00px;font-size:11.34px;line-height:11.34px;color:#4e4e4e;transform:scaleX(0.9673);">C:\Users\Sophie Marchand\Dropbox\Le CFO masqué\Power BI\Démo...</span>
<span class="t" style="left:620.55px;top:477.00px;font-size:11.34px;line-height:11.34px;color:#c9a227;transform:scaleX(0.9645);">Table</span>
</div></body></html>
